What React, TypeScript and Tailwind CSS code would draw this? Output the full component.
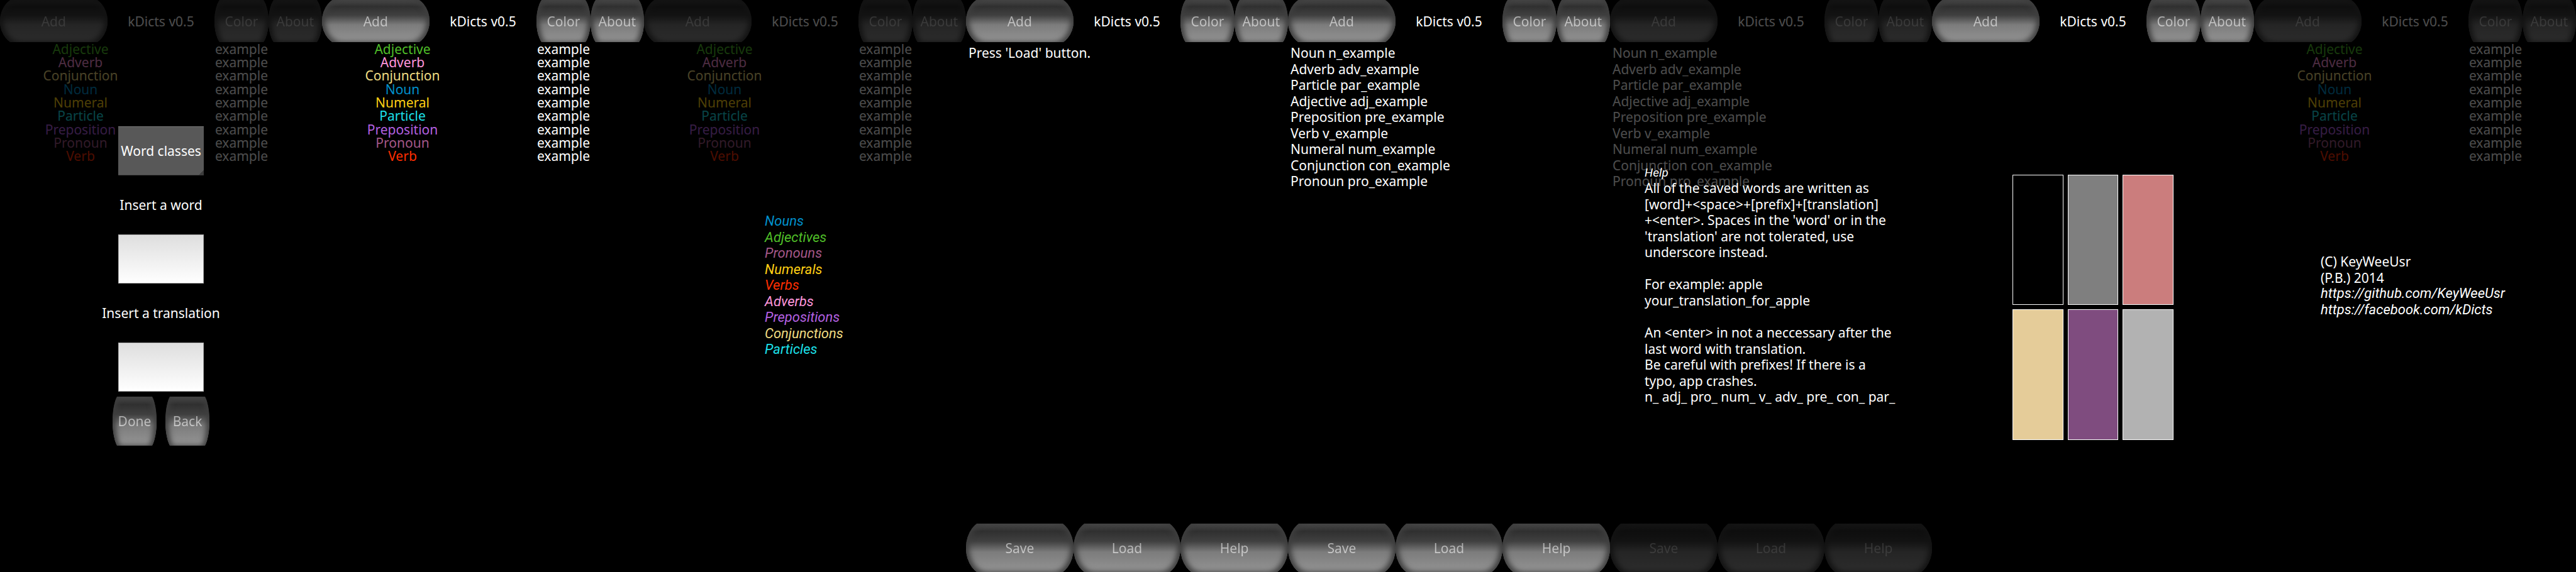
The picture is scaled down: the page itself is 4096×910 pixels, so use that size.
import type { ReactNode } from "react";

const GREEN = "text-[#4fbf28]";
const PINK = "text-[#ff96dc]";
const BUFF = "text-[#f0dc82]";
const BLUE = "text-[#0090cc]";
const YELLOW = "text-[#ffcf14]";
const CYAN = "text-[#1ce0ea]";
const VIOLET = "text-[#b460e2]";
const PLUM = "text-[#a45788]";
const RED = "text-[#ff2e00]";

const dictionary = [
  { word: "Adjective", color: GREEN },
  { word: "Adverb", color: PINK },
  { word: "Conjunction", color: BUFF },
  { word: "Noun", color: BLUE },
  { word: "Numeral", color: YELLOW },
  { word: "Particle", color: CYAN },
  { word: "Preposition", color: VIOLET },
  { word: "Pronoun", color: PLUM },
  { word: "Verb", color: RED },
];

const legend = [
  { name: "Nouns", color: BLUE },
  { name: "Adjectives", color: GREEN },
  { name: "Pronouns", color: PLUM },
  { name: "Numerals", color: YELLOW },
  { name: "Verbs", color: RED },
  { name: "Adverbs", color: PINK },
  { name: "Prepositions", color: VIOLET },
  { name: "Conjunctions", color: BUFF },
  { name: "Particles", color: CYAN },
];

const savedWords = [
  "Noun n_example",
  "Adverb adv_example",
  "Particle par_example",
  "Adjective adj_example",
  "Preposition pre_example",
  "Verb v_example",
  "Numeral num_example",
  "Conjunction con_example",
  "Pronoun pro_example",
];

const helpLines = [
  "All of the saved words are written as",
  "[word]+<space>+[prefix]+[translation]",
  "+<enter>. Spaces in the 'word' or in the",
  "'translation' are not tolerated, use",
  "underscore instead.",
  "",
  "For example: apple",
  "your_translation_for_apple",
  "",
  "An <enter> in not a neccessary after the",
  "last word with translation.",
  "Be careful with prefixes! If there is a",
  "typo, app crashes.",
  "n_ adj_ pro_ num_ v_ adv_ pre_ con_ par_",
];

const swatches = [
  { name: "Black", color: "bg-black" },
  { name: "Gray", color: "bg-[#7f7f7f]" },
  { name: "Rose", color: "bg-[#cb7d7d]" },
  { name: "Sand", color: "bg-[#e5cc99]" },
  { name: "Purple", color: "bg-[#7f4c7f]" },
  { name: "Silver", color: "bg-[#b2b2b2]" },
];

function GlossyButton({ children }: { children: string }) {
  return (
    <button
      type="button"
      className="relative h-full w-full overflow-hidden bg-linear-to-b from-black via-[#0e0e0e] via-60% to-black"
    >
      <span className="absolute inset-x-0 -inset-y-[5px] rounded-[19%/50%] bg-[linear-gradient(to_bottom,#484848_6%,#303030_20%,#404040_38%,#7c7c7c_58%,#909090_88%,#909090)] shadow-[inset_0_0_8px_5px_#3e3e3e]" />
      <span className="relative bg-linear-to-b from-[#a0a0a0] to-[#d8d8d8] bg-clip-text text-transparent">
        {children}
      </span>
    </button>
  );
}

function Header() {
  return (
    <header className="grid h-[67px] shrink-0 grid-cols-6 items-center text-center">
      <div className="col-span-2 h-full">
        <GlossyButton>Add</GlossyButton>
      </div>
      <h1 className="col-span-2">kDicts v0.5</h1>
      <div className="h-full">
        <GlossyButton>Color</GlossyButton>
      </div>
      <div className="h-full">
        <GlossyButton>About</GlossyButton>
      </div>
    </header>
  );
}

function Footer() {
  return (
    <footer className="mt-auto grid h-[77px] shrink-0 grid-cols-3">
      <GlossyButton>Save</GlossyButton>
      <GlossyButton>Load</GlossyButton>
      <GlossyButton>Help</GlossyButton>
    </footer>
  );
}

function WordTable() {
  return (
    <table className="h-48 w-full table-fixed border-collapse text-center leading-5">
      <tbody>
        {dictionary.map((row) => (
          <tr key={row.word}>
            <td className={row.color}>{row.word}</td>
            <td>example</td>
          </tr>
        ))}
      </tbody>
    </table>
  );
}

function WordList({ lines }: { lines: string[] }) {
  return (
    <ul className="mt-[5px] grid h-[230px] auto-rows-[1fr] grid-rows-9 pl-1 leading-6">
      {lines.map((line) => (
        <li key={line}>{line}</li>
      ))}
    </ul>
  );
}

function Screen({ children, popup }: { children?: ReactNode; popup?: ReactNode }) {
  return (
    <section className="relative flex min-h-screen flex-col">
      <Header />
      {children}
      {popup && (
        <div className="absolute inset-0 flex flex-col justify-center bg-black/70">{popup}</div>
      )}
    </section>
  );
}

function AddPopup() {
  return (
    <form className="grid auto-rows-[78px] justify-items-center gap-2">
      <div className="relative w-[136px]">
        <select
          aria-label="Word classes"
          className="h-full w-full appearance-none border-y border-t-[#7c7c7c] border-b-[#444444] bg-[#585858] text-center [text-align-last:center]"
        >
          <option>Word classes</option>
        </select>
        <span className="pointer-events-none absolute right-0 bottom-0 size-2 bg-[linear-gradient(135deg,transparent_50%,#3c3c3c_50%)]" />
      </div>
      <label htmlFor="word" className="self-center">
        Insert a word
      </label>
      <input
        id="word"
        type="text"
        className="w-[136px] border border-[#b0b0b0] bg-linear-to-b from-[#dedede] to-white px-2 text-black"
      />
      <label htmlFor="translation" className="self-center">
        Insert a translation
      </label>
      <input
        id="translation"
        type="text"
        className="w-[136px] border border-[#b0b0b0] bg-linear-to-b from-[#dedede] to-white px-2 text-black"
      />
      <div className="grid grid-cols-[70px_70px] gap-3.5">
        <GlossyButton>Done</GlossyButton>
        <GlossyButton>Back</GlossyButton>
      </div>
    </form>
  );
}

function LegendPopup() {
  return (
    <ul className="grid h-[230px] auto-rows-fr pl-48 font-[Roboto,sans-serif] text-[22px] leading-6 italic">
      {legend.map((item) => (
        <li key={item.name} className={item.color}>
          {item.name}
        </li>
      ))}
    </ul>
  );
}

function HelpPopup() {
  return (
    <div className="pb-0.5 pl-[55px]">
      <h2 className="font-[Roboto,sans-serif] text-[19px] leading-6 italic">Help</h2>
      <div className="grid h-[358px] auto-rows-fr leading-6">
        {helpLines.map((line, index) => (
          <p key={index}>{line}</p>
        ))}
      </div>
    </div>
  );
}

function AboutPopup() {
  return (
    <div className="grid h-[102px] auto-rows-fr justify-items-start pl-[106px] leading-6">
      <p>(C) KeyWeeUsr</p>
      <p>(P.B.) 2014</p>
      <a href="https://github.com/KeyWeeUsr" className="font-[Roboto,sans-serif] text-[22px] italic">
        https://github.com/KeyWeeUsr
      </a>
      <a href="https://facebook.com/kDicts" className="font-[Roboto,sans-serif] text-[22px] italic">
        https://facebook.com/kDicts
      </a>
    </div>
  );
}

function ColorPicker() {
  return (
    <div className="flex grow items-center justify-center">
      <div className="grid h-[422px] w-1/2 grid-cols-3 gap-[7px]">
        {swatches.map((swatch) => (
          <button
            key={swatch.name}
            type="button"
            aria-label={swatch.name}
            className={`border border-white ${swatch.color}`}
          />
        ))}
      </div>
    </div>
  );
}

export default function App() {
  return (
    <main className="grid min-h-screen grid-cols-8 bg-black font-['Noto_Sans',sans-serif] text-[21px] leading-6 text-white">
      <Screen popup={<AddPopup />}>
        <WordTable />
      </Screen>
      <Screen>
        <WordTable />
      </Screen>
      <Screen popup={<LegendPopup />}>
        <WordTable />
      </Screen>
      <Screen>
        <WordList lines={["Press 'Load' button."]} />
        <Footer />
      </Screen>
      <Screen>
        <WordList lines={savedWords} />
        <Footer />
      </Screen>
      <Screen popup={<HelpPopup />}>
        <WordList lines={savedWords} />
        <Footer />
      </Screen>
      <Screen>
        <ColorPicker />
      </Screen>
      <Screen popup={<AboutPopup />}>
        <WordTable />
      </Screen>
    </main>
  );
}
